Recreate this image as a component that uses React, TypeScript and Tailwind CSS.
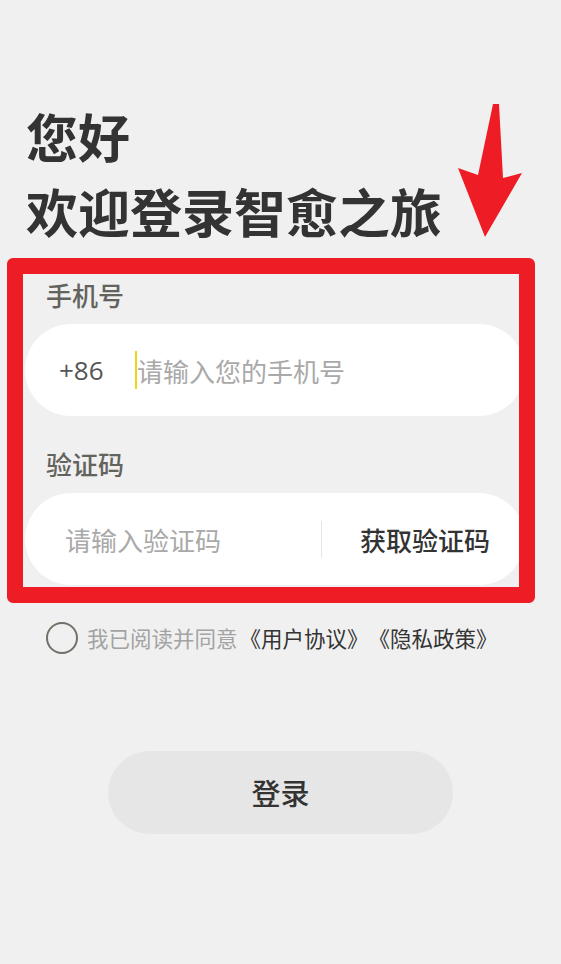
import React from "react";

const cjk = { fontFamily: '"Noto Sans CJK SC", "Noto Sans", sans-serif' };

export default function App() {
  return (
    <div
      className="relative w-[561px] h-[964px] overflow-hidden bg-[#f0f0f0] [text-spacing-trim:space-all]"
      style={cjk}
    >
      <div className="flex flex-col px-[25px] pt-[98px]">
        <div className="pl-[1px] text-[52px] leading-[75px] font-bold text-[#333333]">
          <div>您好</div>
          <div>欢迎登录智愈之旅</div>
        </div>

        <div className="mt-[31px] pl-[21px] text-[26px] leading-[32px] font-medium text-[#63635d]">
          手机号
        </div>
        <div className="mt-[13px] flex h-[92px] w-[500px] items-center rounded-full bg-white pl-[34px]">
          <span
            className="w-[76px] text-[26px] text-[#555555]"
            style={{ fontFamily: '"Open Sans", "Noto Sans", sans-serif' }}
          >
            +86
          </span>
          <span className="h-[38px] w-[2px] bg-[#f2d21b]" />
          <span className="text-[26px] text-[#a9a9a9]">请输入您的手机号</span>
        </div>

        <div className="mt-[32px] pl-[21px] text-[26px] leading-[32px] font-medium text-[#63635d]">
          验证码
        </div>
        <div className="mt-[13px] flex h-[92px] w-[500px] items-center rounded-full bg-white pl-[40px] pr-[35px]">
          <span className="flex-1 text-[26px] text-[#a9a9a9]">请输入验证码</span>
          <span className="h-[37px] w-px bg-[#e6e6e6]" />
          <span className="ml-[38px] text-[26px] font-medium text-[#333333]">
            获取验证码
          </span>
        </div>

        <div className="mt-[37px] flex h-[32px] items-center pl-[21px]">
          <span className="h-[32px] w-[32px] rounded-full border-[2.5px] border-[#717169]" />
          <span className="ml-[9px] text-[21.5px] text-[#a3a3a3]">我已阅读并同意</span>
          <span className="pl-[2px] text-[21.5px] text-[#333333] [text-spacing-trim:space-all]">
            《用户协议》《隐私政策》
          </span>
        </div>

        <div className="ml-[83px] mt-[97px] flex h-[83px] w-[345px] items-center justify-center rounded-full bg-[#e6e6e6]">
          <span className="text-[29px] font-medium text-[#333333]">登录</span>
        </div>
      </div>

      {/* annotation overlays */}
      <div className="absolute left-[7px] top-[258px] h-[345px] w-[528px] rounded-[6px] border-[16px] border-[#ee1c25]" />
      <svg
        className="absolute left-[450px] top-[100px]"
        width="80"
        height="140"
        viewBox="0 0 80 140"
      >
        <polygon
          points="43,4 49,4 53,78 72,73 35,137 8,68 28,75"
          fill="#ee1c25"
        />
      </svg>
    </div>
  );
}
